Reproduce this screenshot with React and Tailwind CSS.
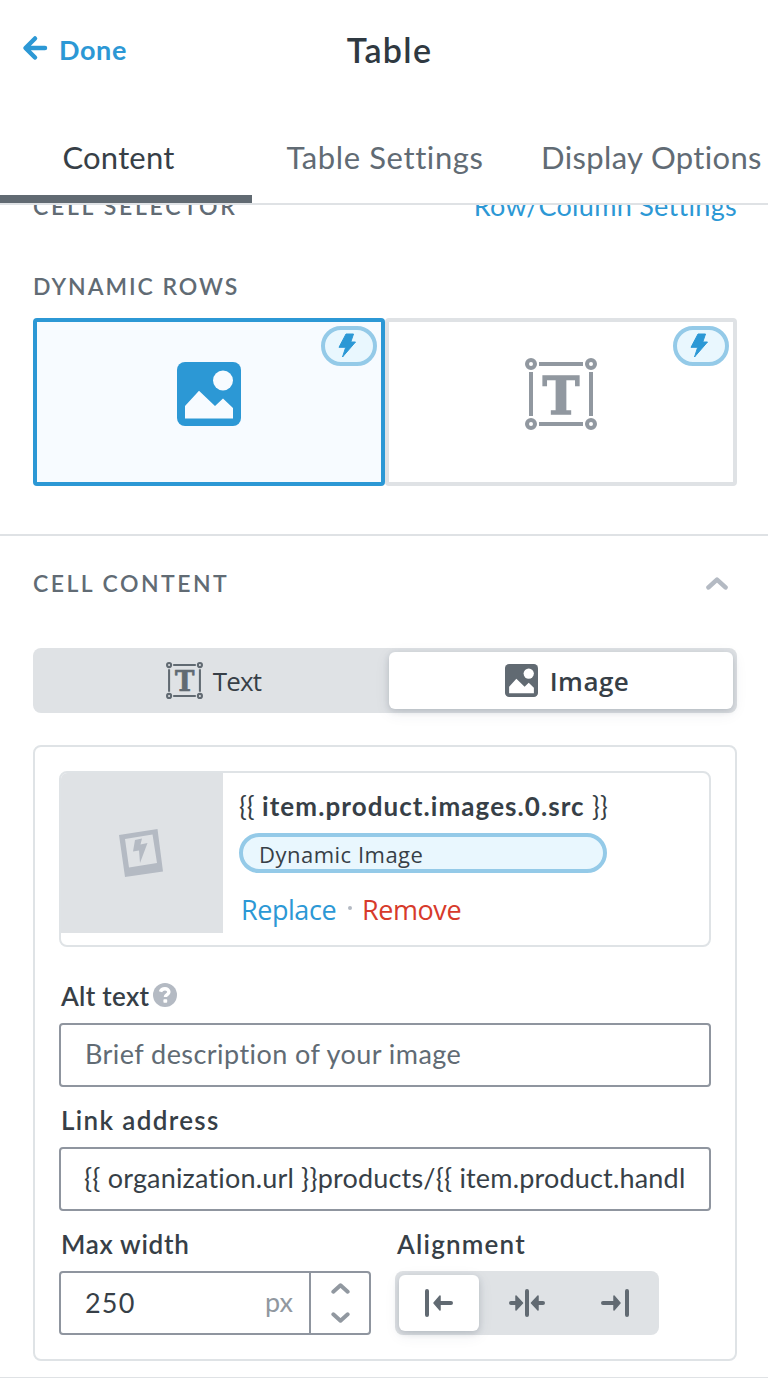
import { useState } from "react";

const ImageIcon = ({ className, hole }) => (
  <svg viewBox="0 0 64 64" className={className}>
    <rect width="64" height="64" rx="8" fill="currentColor" />
    <circle cx="46" cy="18.5" r="10" fill={hole} />
    <path d="M8 44 22 28.7 38 44l8-7.6L56 46v10.5H8z" fill={hole} />
  </svg>
);

const TextIcon = ({ className }) => (
  <svg viewBox="0 0 72 72" className={className} fill="none" stroke="currentColor" strokeWidth="4">
    <circle cx="6" cy="6" r="4" />
    <circle cx="66" cy="6" r="4" />
    <circle cx="6" cy="66" r="4" />
    <circle cx="66" cy="66" r="4" />
    <path d="M14 6h44M14 66h44M6 14v44M66 14v44" />
    <text
      x="17.5"
      y="55.5"
      fontSize="53"
      fontWeight="700"
      textLength="37"
      lengthAdjust="spacingAndGlyphs"
      fill="currentColor"
      strokeWidth="1.4"
      className="font-['DejaVu_Serif',serif]"
    >
      T
    </text>
  </svg>
);

const Chevron = ({ className }) => (
  <svg viewBox="0 0 22 13" className={className} fill="none" stroke="currentColor" strokeWidth="4.6" strokeLinecap="round" strokeLinejoin="round">
    <path d="M2.5 10.4 11 2.6l8.5 7.8" />
  </svg>
);

const DynamicBadge = () => (
  <span className="absolute top-1 right-1 flex h-10 w-14 items-center justify-center rounded-full border-4 border-[#94cae8] bg-[#e9f7fe]">
    <svg viewBox="0 0 18 25" className="-mt-px mr-[5px] h-[25px] w-[18px] text-[#2c98d5]">
      <path d="M8 1h7.5l-2.7 8h4.7L4.5 24l3.2-9.7H1z" fill="currentColor" stroke="currentColor" strokeLinejoin="round" />
    </svg>
  </span>
);

const AlignIcon = ({ type }) => (
  <svg viewBox="0 0 40 28" className="h-7 w-10" fill="none" stroke="currentColor" strokeWidth="4" strokeLinecap="round">
    {type === "left" && (
      <>
        <path d="M8 2v24M20 14h12" />
        <path d="m15 14 6-7v14z" fill="currentColor" strokeWidth="1.5" strokeLinejoin="round" />
      </>
    )}
    {type === "center" && (
      <>
        <path d="M20 2v24M4 14h6M30 14h6" />
        <path d="M15.5 14 9 7v14zM24.5 14l6.5-7v14z" fill="currentColor" strokeWidth="1.5" strokeLinejoin="round" />
      </>
    )}
    {type === "right" && (
      <>
        <path d="M32 2v24M8 14h12" />
        <path d="m25 14-6-7v14z" fill="currentColor" strokeWidth="1.5" strokeLinejoin="round" />
      </>
    )}
  </svg>
);

const alignments = ["left", "center", "right"];

const App = () => {
  const [alignment, setAlignment] = useState("left");
  const [link, setLink] = useState("{{ organization.url }}products/{{ item.product.handle }}");
  const [alt, setAlt] = useState("");
  const [width, setWidth] = useState(250);

  return (
    <div className="flex h-[1378px] w-[768px] flex-col overflow-hidden bg-white font-[Lato,sans-serif] text-[#373f47] [font-variant-ligatures:none]">
      <header className="grid h-[100px] grid-cols-3 items-center px-[22px]">
        <button className="flex items-center gap-[11px] text-[27px] font-bold tracking-[0.6px] text-[#2c98d5]">
          <svg viewBox="0 0 26 26" className="-mt-1 h-[26px] w-[26px]" fill="none" stroke="currentColor" strokeWidth="4.5" strokeLinecap="round" strokeLinejoin="round">
            <path d="M13 3.5 3.5 13l9.5 9.5M4 13h19" />
          </svg>
          Done
        </button>
        <h1 className="pb-0.5 pl-[11px] text-center text-[34px] font-semibold tracking-[1.3px] text-[#2f3941]">Table</h1>
      </header>

      <nav className="flex h-[105px] shrink-0 border-b-2 border-[#dfe2e5] text-[31px] whitespace-nowrap text-[#616b74]">
        <button className="w-[252px] border-b-8 border-[#616a72] pt-[19px] pr-[15px] tracking-[0.2px] text-[#373f47]">Content</button>
        <button className="w-[266px] pt-[11px] tracking-[0.6px]">Table Settings</button>
        <button className="w-[250px] pt-[11px] pl-[17px] tracking-[0.35px]">Display Options</button>
      </nav>

      <main className="min-h-0 flex-1 overflow-hidden">
        <section className="-mt-[19px] h-[350px] border-b-2 border-[#dfe2e5] pr-[31px] pl-[33px]">
          <div className="flex h-10 items-center justify-between">
            <h2 className="text-[23px] font-semibold tracking-[2.7px] text-[#616b74]">CELL SELECTOR</h2>
            <a className="text-[27px] tracking-[0.3px] text-[#2c98d5]">Row/Column Settings</a>
          </div>
          <h2 className="mt-10 flex h-10 items-center text-[23px] font-semibold tracking-[1.95px] text-[#616b74]">DYNAMIC ROWS</h2>
          <div className="mt-3 grid h-[168px] grid-cols-2">
            <div className="relative flex items-center justify-center rounded border-4 border-[#2c98d5] bg-[#f7fbff] pb-4 text-[#2c98d5]">
              <ImageIcon className="h-16 w-16" hole="#f7fbff" />
              <DynamicBadge />
            </div>
            <div className="relative flex items-center justify-center rounded border-4 border-[#dfe2e5] pb-4 text-[#9198a0]">
              <TextIcon className="h-[72px] w-[72px]" />
              <DynamicBadge />
            </div>
          </div>
        </section>

        <section className="pr-[31px] pl-[33px]">
          <div className="flex h-[112px] items-center justify-between pr-[9px] pb-[17px]">
            <h2 className="text-[23px] font-semibold tracking-[2.45px] text-[#616b74]">CELL CONTENT</h2>
            <Chevron className="h-[13px] w-[22px] text-[#b4bac3]" />
          </div>

          <div className="flex h-[65px] rounded-lg bg-[#dfe2e5] p-1 font-['Open_Sans',sans-serif] text-[26px]">
            <button className="flex w-[352px] items-center justify-center gap-2.5 pl-px tracking-[-0.8px]">
              <TextIcon className="h-[37px] w-[37px] text-[#616a72]" />
              <span className="pt-0.5">Text</span>
            </button>
            <button className="flex flex-1 items-center justify-center gap-[12px] rounded-md bg-white pl-[12px] font-semibold tracking-[0.5px] shadow-[0_2px_6px_rgba(55,70,85,0.2),0_4px_16px_rgba(55,70,85,0.08)]">
              <ImageIcon className="h-[33px] w-[33px] text-[#616a72]" hole="#ffffff" />
              <span className="pt-0.5">Image</span>
            </button>
          </div>

          <div className="mt-8 h-[616px] rounded-lg border-2 border-[#dfe3e6] p-6">
            <div className="flex h-[176px] overflow-hidden rounded-lg border-2 border-[#dfe3e6]">
              <div className="flex h-[160px] w-[162px] items-center justify-center bg-[#dfe2e5] pr-[2px]">
                <svg viewBox="0 0 44 48" className="h-12 w-11">
                  <path d="M0 6 38.5 0 44 42.5 6 48zM6 10l4 28.5L38 34 33.5 5.5z" fill="#b4bac3" fillRule="evenodd" />
                  <path d="m16 11 7-1.5-1.5 6 7-1.5L21 34l-1-12.5-6 1z" fill="#b4bac3" />
                </svg>
              </div>
              <div className="flex flex-col pl-4">
                <p className="h-[60px] pt-[13px] text-[26px] leading-10 font-bold tracking-[1.07px] whitespace-nowrap">
                  <span className="font-normal tracking-normal">{"{{"}</span> item.product.images.0.src{" "}
                  <span className="font-normal tracking-normal">{"}}"}</span>
                </p>
                <span className="flex h-10 w-[368px] items-center rounded-full border-4 border-[#94cae8] bg-[#e9f7fe] pt-[3px] pl-4 font-['Open_Sans',sans-serif] text-[22px] tracking-[0.5px]">
                  Dynamic Image
                </span>
                <div className="mt-[17px] flex h-10 items-center pl-[2px] font-['Open_Sans',sans-serif] text-[27px] tracking-[-0.45px]">
                  <a className="text-[#2c98d5]">Replace</a>
                  <span className="mr-[10px] mb-1 ml-[12px] h-1 w-1 rounded-full bg-[#b4bac3]" />
                  <a className="text-[#d73a2b]">Remove</a>
                </div>
              </div>
            </div>

            <label className="flex h-[76px] items-center gap-1 pt-[23px] pl-[2px] text-[26px] font-semibold tracking-[0.3px]">
              Alt text
              <svg viewBox="0 0 24 24" className="mb-1 h-6 w-6">
                <circle cx="12" cy="12" r="12" fill="#b4bac3" />
                <path d="M7.5 8.8C8.2 6.6 10 5.8 12 5.8c2 0 3.9 1.2 3.9 3.2 0 2.6-3.5 2.6-3.5 5" fill="none" stroke="white" strokeWidth="3.4" />
                <rect x="10.4" y="16.2" width="3.8" height="3.6" rx="0.8" fill="white" />
              </svg>
            </label>
            <input
              value={alt}
              onChange={(e) => setAlt(e.target.value)}
              placeholder="Brief description of your image"
              className="block h-16 w-full rounded border-2 border-[#8f959f] px-6 pb-[3px] text-[27px] tracking-[0.44px] placeholder:text-[#616b74]"
            />

            <label className="flex h-[60px] items-center pt-[6px] pl-[2px] text-[26px] font-semibold tracking-[1.35px]">Link address</label>
            <input
              value={link}
              onChange={(e) => setLink(e.target.value)}
              className="block h-16 w-full rounded border-2 border-[#8f959f] pr-[25px] pb-[3px] pl-[23px] text-[27px] tracking-[0.18px]"
            />

            <div className="flex gap-6">
              <div className="w-[312px]">
                <label className="flex h-[60px] items-center pt-[6px] pl-[2px] text-[26px] font-semibold tracking-[0.7px]">Max width</label>
                <div className="flex h-16 rounded border-2 border-[#8f959f] text-[27px]">
                  <input
                    value={width}
                    onChange={(e) => setWidth(Number(e.target.value) || 0)}
                    className="w-[180px] pl-6 tracking-[1.2px]"
                  />
                  <span className="flex flex-1 items-center justify-end border-r-2 border-[#8f959f] pr-4 pb-0.5 text-[#9198a0]">px</span>
                  <div className="flex w-[58px] flex-col items-center justify-center gap-[18px] text-[#9198a0]">
                    <button onClick={() => setWidth(width + 1)}>
                      <Chevron className="h-[11px] w-[19px]" />
                    </button>
                    <button onClick={() => setWidth(width - 1)}>
                      <Chevron className="h-[11px] w-[19px] rotate-180" />
                    </button>
                  </div>
                </div>
              </div>
              <div>
                <label className="flex h-[60px] items-center pt-[6px] pl-[2px] text-[26px] font-semibold tracking-[1.2px]">Alignment</label>
                <div className="flex h-16 w-[264px] gap-2 rounded-lg bg-[#dfe2e5] p-1 text-[#616a72]">
                  {alignments.map((type) => (
                    <button
                      key={type}
                      onClick={() => setAlignment(type)}
                      className={
                        alignment === type
                          ? "flex flex-1 items-center justify-center rounded-md bg-white shadow-[0_2px_6px_rgba(55,70,85,0.2),0_4px_16px_rgba(55,70,85,0.08)]"
                          : "flex flex-1 items-center justify-center rounded-md"
                      }
                    >
                      <AlignIcon type={type} />
                    </button>
                  ))}
                </div>
              </div>
            </div>
          </div>
        </section>
        <div className="mt-4 h-px bg-[#dfe2e5]" />
      </main>
    </div>
  );
};

export default App;
